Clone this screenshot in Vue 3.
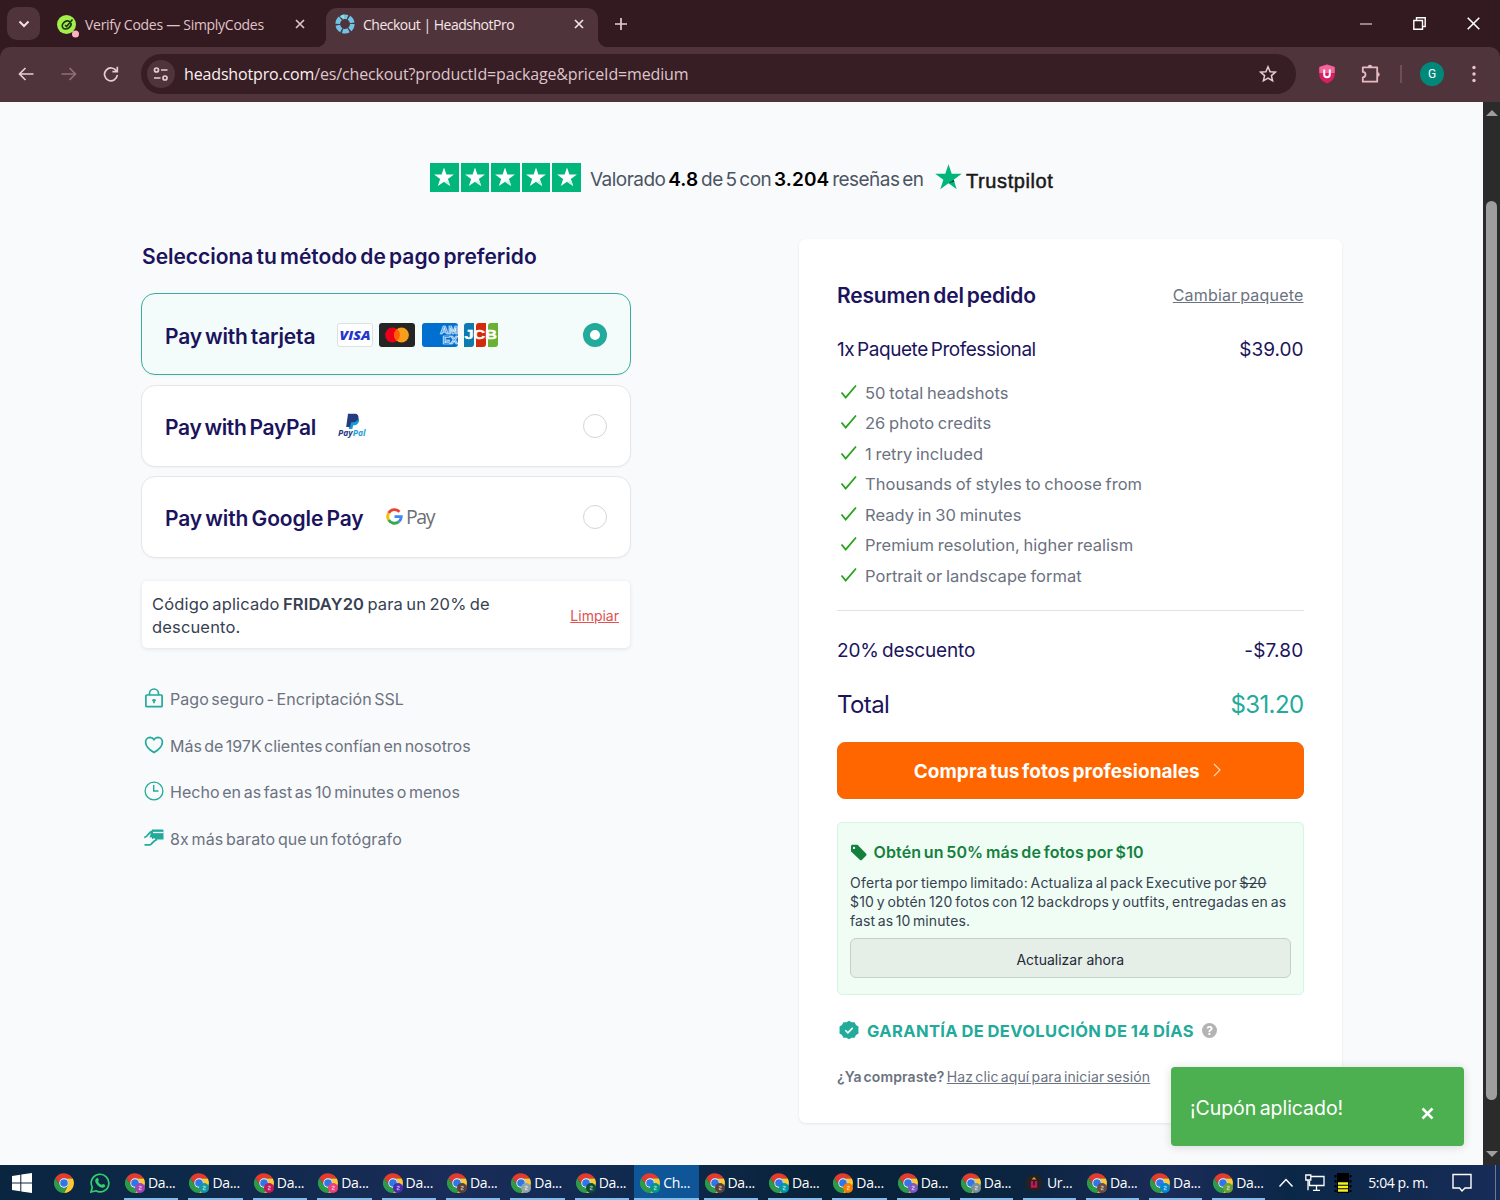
<template>
  <div class="desktop">
    <header class="browser">
      <div class="tab-strip">
        <div class="tab-search">
          <svg width="12" height="8" viewBox="0 0 12 8"><path d="M1.500 1.500 6 6l4.500-4.500" fill="none" stroke="#f6dfe2" stroke-width="2" /></svg>
        </div>
        <div class="tab idle">
          <svg class="favicon" width="24" height="24" viewBox="0 0 24 24">
            <circle cx="10.500" cy="10.500" r="9.500" fill="#a4f04a" />
            <path d="M14.500 8.500c-1.500-1.800-4-2-6-.5s-3 4-1.700 5.700 4 1.600 5.900.3 2.700-3.300 2.300-5M9 11l1.500 1.500 6-7" fill="none" stroke="#1c3312" stroke-width="1.600" />
            <circle cx="19.500" cy="20" r="3.500" fill="#ffb3c1" />
          </svg>
          <span class="tab-title first">Verify Codes — SimplyCodes</span>
          <svg class="close" width="10" height="10" viewBox="0 0 10 10"><path d="m1 1 8 8M9 1 1 9" stroke="#dfc3c8" stroke-width="1.700" /></svg>
        </div>
        <div class="tab active">
          <svg class="favicon" width="20" height="20" viewBox="0 0 20 20">
            <circle cx="10" cy="10" r="7.300" fill="none" stroke="#6fc3e8" stroke-width="4.600" stroke-dasharray="6.200 1.445" />
            <path d="M4.500 3A9 9 0 0 1 9 .5v4Z" fill="#8be3d0" />
          </svg>
          <span class="tab-title second">Checkout | HeadshotPro</span>
          <svg class="close" width="10" height="10" viewBox="0 0 10 10"><path d="m1 1 8 8M9 1 1 9" stroke="#f3e3e5" stroke-width="1.700" /></svg>
        </div>
        <svg class="new-tab" width="14" height="14" viewBox="0 0 14 14"><path d="M7 1v12M1 7h12" stroke="#e6cdd1" stroke-width="1.700" /></svg>
        <div class="window-controls">
          <svg width="12" height="12" viewBox="0 0 12 12"><path d="M0 6h12" stroke="#b8a8ac" stroke-width="1.500" /></svg>
          <svg width="13" height="13" viewBox="0 0 13 13"><path d="M.8 3.500h8.700v8.700H.8ZM3.500 3.500V.8h8.700v8.700H9.500" fill="none" stroke="#fff" stroke-width="1.400" /></svg>
          <svg width="13" height="13" viewBox="0 0 13 13"><path d="m.7.7 11.600 11.600M12.300.7.7 12.300" stroke="#fff" stroke-width="1.600" /></svg>
        </div>
      </div>

      <div class="toolbar">
        <svg class="nav-back" width="16" height="14" viewBox="0 0 16 14"><path d="M15.500 7H1.500M7.500 1l-6 6 6 6" fill="none" stroke="#e6cdd1" stroke-width="1.700" /></svg>
        <svg class="nav-forward" width="16" height="14" viewBox="0 0 16 14"><path d="M.5 7h14M8.500 1l6 6-6 6" fill="none" stroke="#8d6f76" stroke-width="1.700" /></svg>
        <svg class="nav-reload" width="16" height="16" viewBox="0 0 16 16"><path d="M13.500 5.200A6.400 6.400 0 1 0 14.300 9M14.300.8v4.900H9.400" fill="none" stroke="#e6cdd1" stroke-width="1.700" /></svg>
        <div class="address-bar">
          <span class="site-info">
            <svg width="16" height="14" viewBox="0 0 16 14">
              <g fill="none" stroke="#e6cdd1" stroke-width="1.700">
                <circle cx="3.500" cy="3" r="2" /><path d="M8 3h6.500M1 11h6.500" /><circle cx="12" cy="11" r="2" />
              </g>
            </svg>
          </span>
          <span class="url"><b>headshotpro.com</b>/es/checkout?productId=package&amp;priceId=medium</span>
          <svg class="bookmark" width="18" height="18" viewBox="0 0 18 18"><path d="m9 1.800 2.100 4.900 5.300.4-4 3.500 1.200 5.200L9 13.100l-4.600 2.700 1.200-5.200-4-3.500 5.300-.4Z" fill="none" stroke="#e6cdd1" stroke-width="1.500" /></svg>
        </div>
        <svg class="ublock" width="16" height="20" viewBox="0 0 16 20">
          <path d="M8 .5 15.700 3v8c0 4-4 7-7.700 8.500C4.300 18 .3 15 .3 11V3Z" fill="#d91e63" />
          <path d="M8 .5 15.700 3v6H.3V3Z" fill="#f1659a" />
          <path d="M5.200 5.500v5a2.800 2.800 0 0 0 5.600 0v-5" fill="none" stroke="#fff" stroke-width="2" />
        </svg>
        <svg class="extensions" width="20" height="20" viewBox="0 0 20 20"><path d="M1.800 3.300h14.400v14.400H1.800v-4.400a2.500 2.500 0 0 0 0-5.400Z" fill="none" stroke="#e9b9c2" stroke-width="1.800" stroke-linejoin="round" /><path d="M6.800 3a2.200 2.200 0 0 1 4.400 0ZM16.500 8.300a2.200 2.200 0 0 1 0 4.400Z" fill="#e9b9c2" /></svg>
        <span class="separator"></span>
        <span class="avatar">G</span>
        <svg class="menu" width="4" height="18" viewBox="0 0 4 18"><g fill="#e9c5cb"><circle cx="2" cy="2.500" r="1.700" /><circle cx="2" cy="9" r="1.700" /><circle cx="2" cy="15.500" r="1.700" /></g></svg>
      </div>
    </header>

    <div class="viewport">
      <main class="page">
        <div class="rating">
          <div class="stars">
            <span v-for="n in 5" :key="n" class="star-box">
              <svg width="22" height="22" viewBox="0 0 24 24"><path :d="starPath" fill="#fff" /><path d="m12 17.100 4.900-1.300 1.800 6.100Z" fill="#c9f0e0" /></svg>
            </span>
          </div>
          <p class="rating-text">Valorado <b>4.8</b> de 5 con <b>3.204</b> reseñas en</p>
          <svg class="trustpilot-star" width="27" height="27" viewBox="1 1 22 21"><path :d="starPath" fill="#00b67a" /><path d="m12 17.100 4.900-1.300-.7-1.700Z" fill="#005128" /></svg>
          <span class="trustpilot">Trustpilot</span>
        </div>

        <div class="columns">
          <section class="payment">
            <h2>Selecciona tu método de pago preferido</h2>

            <div class="methods">
              <div v-for="method in methods" :key="method.id" class="method" :class="{ selected: method.id === selected }" @click="selected = method.id">
                <span class="method-name" :class="method.id">{{ method.label }}</span>
                <div v-if="method.id === 'card'" class="cards">
                  <svg width="36" height="24" viewBox="0 0 36 24">
                    <rect x=".5" y=".5" width="35" height="23" rx="2.500" fill="#fff" stroke="#dcdfe6" />
                    <text x="2.500" y="17" font-family="Open Sans, sans-serif" font-size="13" font-weight="800" font-style="italic" fill="#2436cf" textLength="31" lengthAdjust="spacingAndGlyphs">VISA</text>
                  </svg>
                  <svg width="36" height="24" viewBox="0 0 36 24">
                    <rect width="36" height="24" rx="3" fill="#252525" />
                    <circle cx="13.500" cy="12" r="7.400" fill="#eb001b" /><circle cx="22.500" cy="12" r="7.400" fill="#f79e1b" />
                    <path d="M18 6.100a7.400 7.400 0 0 1 0 11.800 7.400 7.400 0 0 1 0-11.800Z" fill="#ff5f00" />
                  </svg>
                  <svg width="36" height="24" viewBox="0 0 36 24">
                    <rect width="36" height="24" rx="3" fill="#016fd0" />
                    <g font-family="Liberation Sans, sans-serif" font-size="10" font-weight="700" fill="#016fd0" stroke="#e9f4ff" stroke-width=".7">
                      <text x="18" y="11" textLength="18" lengthAdjust="spacingAndGlyphs">AM</text>
                      <text x="20.500" y="20.500" textLength="15.500" lengthAdjust="spacingAndGlyphs">EX</text>
                    </g>
                  </svg>
                  <svg width="34" height="24" viewBox="0 0 34 24">
                    <path d="M3 0h7v21a3 3 0 0 1-3 3H0V3a3 3 0 0 1 3-3Z" fill="#0e7bb0" />
                    <path d="M15 0h7v21a3 3 0 0 1-3 3h-7V3a3 3 0 0 1 3-3Z" fill="#d42a0b" />
                    <path d="M27 0h7v21a3 3 0 0 1-3 3h-7V3a3 3 0 0 1 3-3Z" fill="#68b132" />
                    <text x=".5" y="16" font-family="Liberation Sans, sans-serif" font-size="12" font-weight="700" fill="#fff" stroke="#fff" stroke-width=".4" textLength="32.500" lengthAdjust="spacingAndGlyphs">JCB</text>
                  </svg>
                </div>
                <svg v-else-if="method.id === 'paypal'" class="paypal-logo" width="29" height="26" viewBox="0 0 29 26">
                  <path d="M12 4h6.500c3 .5 3 3.500 2 5.500s-3 2.800-5.300 2.800L14.300 16H10.800Z" fill="#169bd7" />
                  <path d="M10 .7h6.500c3 0 4.500 2 3.800 4.800-.7 2.700-2.800 3.700-5.600 3.700h-1.500l-1 4.800H8.200Z" fill="#253b80" />
                  <text x="0" y="23" font-family="Open Sans, sans-serif" font-size="8" font-weight="700" font-style="italic" textLength="27.500" lengthAdjust="spacingAndGlyphs"><tspan fill="#253b80">Pay</tspan><tspan fill="#249fd8">Pal</tspan></text>
                </svg>
                <div v-else class="gpay-logo">
                  <svg width="17" height="17" viewBox="0 0 17 17" fill="none" stroke-width="2.900">
                    <path d="M13.500 3.700A6.800 6.800 0 0 0 2.700 5" stroke="#ea4335" />
                    <path d="M2.700 5a6.800 6.800 0 0 0 0 7" stroke="#fbbc04" />
                    <path d="M2.700 12a6.800 6.800 0 0 0 10.200 1.700" stroke="#34a853" />
                    <path d="M12.900 13.700A6.800 6.800 0 0 0 15.300 8.600H8.500" stroke="#4285f4" />
                  </svg>
                  <span>Pay</span>
                </div>
                <span class="radio"></span>
              </div>
            </div>

            <div class="coupon">
              <p>Código aplicado <b>FRIDAY20</b> para un 20% de<br>descuento.</p>
              <a>Limpiar</a>
            </div>

            <ul class="trust">
              <li v-for="item in trust" :key="item.icon">
                <svg width="20" height="20" viewBox="0 0 20 20" fill="none" stroke="#22aa9b" stroke-width="1.700">
                  <template v-if="item.icon === 'lock'">
                    <rect x="1.900" y="7" width="16.200" height="11.700" rx=".8" />
                    <path d="M5.500 7V5.500a4.500 4.500 0 0 1 9 0V7M10 11v4.200M8.200 12.400h3.600" />
                  </template>
                  <path v-else-if="item.icon === 'heart'" d="M10 17.500C6.500 15.500 1.600 11.500 1.600 7A4.700 4.700 0 0 1 6 2.300c1.800 0 3.200.9 4 2.300.8-1.400 2.200-2.300 4-2.300A4.700 4.700 0 0 1 18.400 7c0 4.500-4.900 8.500-8.400 10.500Z" />
                  <template v-else-if="item.icon === 'clock'">
                    <circle cx="10" cy="10" r="8.900" stroke-width="1.300" /><path d="M9.700 4v6h4.800" stroke-width="1.400" />
                  </template>
                  <template v-else>
                    <path d="M8 1.500h10.500a1 1 0 0 1 1 1v9h-7.300L8.500 9 5.500 9.500Z" fill="#22aa9b" stroke="none" />
                    <path d="M9 4.500h10.500" stroke="#f9fafc" stroke-width="1.300" />
                    <path d="M.3 9.500C4 9 4.500 3.500 8.500 3.500M12 6.500 8 10.500M.5 16.800h5.500c1.500 0 3-4 7-5.500" stroke-width="1.800" />
                  </template>
                </svg>
                <span :class="item.icon">{{ item.text }}</span>
              </li>
            </ul>
          </section>

          <section class="summary">
            <div class="summary-head">
              <h2>Resumen del pedido</h2>
              <a>Cambiar paquete</a>
            </div>
            <div class="line package">
              <span class="package-name">1x Paquete Professional</span>
              <span>$39.00</span>
            </div>
            <ul class="features">
              <li v-for="feature in features" :key="feature">
                <svg width="18" height="16" viewBox="0 0 18 16"><path d="m1.500 8.500 4.200 5L16 1.500" fill="none" stroke="#27a31b" stroke-width="1.800" /></svg>
                {{ feature }}
              </li>
            </ul>
            <div class="divider"></div>
            <div class="line discount">
              <span class="discount-name">20% descuento</span>
              <span class="discount-value">-$7.80</span>
            </div>
            <div class="total">
              <span>Total</span>
              <span class="amount">$31.20</span>
            </div>
            <button class="buy">
              <span>Compra tus fotos profesionales</span>
              <svg width="8" height="14" viewBox="0 0 8 14"><path d="m1 1 6 6-6 6" fill="none" stroke="#ffd9bd" stroke-width="1.200" /></svg>
            </button>

            <div class="promo">
              <h3>
                <svg width="17" height="17" viewBox="0 0 17 17"><path d="M2.500.8 7.500.8 16 9.500c.7.700.7 1.500 0 2.200L12 15.800c-.7.7-1.500.7-2.200 0L1 7.500V2.300C1 1.400 1.600.8 2.500.8Z" fill="#15803d" /><circle cx="4" cy="3.900" r="1.200" fill="#effdf4" /></svg>
                <span>Obtén un 50% más de fotos por $10</span>
              </h3>
              <p>
                <span class="l1">Oferta por tiempo limitado: Actualiza al pack Executive por <s>$20</s></span>
                <span class="l2">$10 y obtén 120 fotos con 12 backdrops y outfits, entregadas en as</span>
                <span class="l3">fast as 10 minutes.</span>
              </p>
              <button>Actualizar ahora</button>
            </div>

            <div class="guarantee">
              <svg width="20" height="20" viewBox="0 0 20 20">
                <path d="m10 .8 2.600 1.500 3-.1 1.400 2.700 2.500 1.600L19.400 10l.1 3.500-2.500 1.600-1.400 2.700-3-.1L10 19.200l-2.600-1.500-3 .1L3 15.100.5 13.500.6 10 .5 6.500 3 4.900l1.400-2.700 3 .1Z" fill="#22aa9b" />
                <path d="m6.300 10.300 2.600 2.600 4.800-5" fill="none" stroke="#fff" stroke-width="1.600" />
              </svg>
              <span>GARANTÍA DE DEVOLUCIÓN DE 14 DÍAS</span>
              <i class="help">?</i>
            </div>
            <p class="login"><b>¿Ya compraste?</b> <a>Haz clic aquí para iniciar sesión</a></p>
          </section>
        </div>
      </main>

      <div class="scrollbar">
        <span class="arrow up"></span>
        <span class="thumb"></span>
        <span class="arrow down"></span>
      </div>

      <div class="toast">
        <span>¡Cupón aplicado!</span>
        <svg width="13" height="13" viewBox="0 0 13 13"><path d="m1.500 1.500 10 10M11.500 1.500l-10 10" stroke="#fff" stroke-width="2.500" /></svg>
      </div>
    </div>

    <footer class="taskbar">
      <svg class="start" width="20" height="20" viewBox="0 0 20 20"><path d="M0 3 8.300 1.700v7.700H0ZM9.300 1.500 20 0v9.400H9.300ZM0 10.500h8.300v7.800L0 17ZM9.300 10.500H20V20L9.300 18.500Z" fill="#fff" /></svg>
      <svg class="pinned-chrome" width="20" height="20" viewBox="0 0 24 24">
        <path v-for="part in chromeParts" :key="part.fill" :d="part.d" :fill="part.fill" />
        <circle cx="12" cy="12" r="5.700" fill="#fff" /><circle cx="12" cy="12" r="4.600" fill="#2f76e8" />
      </svg>
      <svg class="whatsapp" width="20" height="20" viewBox="0 0 20 20">
        <path d="M1 19l1.300-4.700A8.800 8.800 0 1 1 5.800 17.800Z" fill="none" stroke="#31d06a" stroke-width="1.700" />
        <path d="M6.300 5.500c.9-1 1.500-.7 1.900.1l.6 1.500c.1.600-.8 1.200-.6 1.600.8 1.500 1.900 2.500 3.400 3.100.4.200 1-.9 1.500-.8l2 .9c.5 1.700-1 2.800-2.600 2.800-3.500-.3-7.300-4.200-7.300-7 0-.9.500-1.700 1.100-2.200Z" fill="#31d06a" />
      </svg>
      <div class="tasks">
        <div v-for="(task, i) in tasks" :key="i" class="task" :class="{ current: task.label === 'Ch...', tight: i > 11 }">
          <svg v-if="task.badge" width="20" height="20" viewBox="0 0 24 24">
            <path v-for="part in chromeParts" :key="part.fill" :d="part.d" :fill="part.fill" />
            <circle cx="12" cy="12" r="5.700" fill="#fff" /><circle cx="12" cy="12" r="4.600" fill="#2f76e8" />
            <circle cx="18" cy="18" r="6" :fill="task.badge" />
            <path d="M16.500 16h3v1.500l-2.500 1v1.500h3" fill="none" stroke="#fff" stroke-opacity=".7" />
          </svg>
          <svg v-else width="20" height="20" viewBox="0 0 20 20">
            <circle cx="10" cy="10" r="8.500" fill="#27211f" />
            <path d="M8 8v5.500h4V8" fill="none" stroke="#c2185b" stroke-width="2.300" /><path d="M7.500 6.500 10 4l2.500 2.500Z" fill="#d39b38" />
          </svg>
          <span>{{ task.label }}</span>
        </div>
      </div>
      <svg class="tray-chevron" width="16" height="10" viewBox="0 0 16 10"><path d="m1.500 8.500 6.500-7 6.500 7" fill="none" stroke="#fff" stroke-width="1.500" /></svg>
      <svg class="network" width="20" height="18" viewBox="0 0 20 18">
        <g fill="none" stroke="#fff" stroke-width="1.300"><path d="M6 2.500h13v9H4.500V7M11.500 12v4.300M8 16.300h7M.8 1h5v5h-5ZM3 6v10.300" /></g>
      </svg>
      <svg class="memory" width="20" height="20" viewBox="0 0 20 20">
        <rect x="4" width="12" height="20" fill="#000" />
        <path d="M2.500 2v17M17.500 2v17" stroke="#000" stroke-width="2" stroke-dasharray="2.500 2.500" />
        <path d="M5 10.500h10M5 14h10M5 17.500h10" stroke="#f4f01d" stroke-width="2.300" />
      </svg>
      <span class="time">5:04 p. m.</span>
      <svg class="notifications" width="20" height="20" viewBox="0 0 20 20"><path d="M1 1.500h18v13.500h-6L10 18 7.500 15H1Z" fill="none" stroke="#fff" stroke-width="1.400" /></svg>
      <span class="show-desktop"></span>
    </footer>
  </div>
</template>

<script setup>
import { ref } from 'vue'

const selected = ref('card')

const starPath = 'M12 1.500 14.600 9.300H22.800L16.200 14.100 18.700 21.900 12 17.100 5.300 21.900 7.800 14.100 1.200 9.300H9.400Z'

const methods = [
  { id: 'card', label: 'Pay with tarjeta' },
  { id: 'paypal', label: 'Pay with PayPal' },
  { id: 'gpay', label: 'Pay with Google Pay' }
]

const trust = [
  { icon: 'lock', text: 'Pago seguro - Encriptación SSL' },
  { icon: 'heart', text: 'Más de 197K clientes confían en nosotros' },
  { icon: 'clock', text: 'Hecho en as fast as 10 minutes o menos' },
  { icon: 'price', text: '8x más barato que un fotógrafo' }
]

const features = [
  '50 total headshots',
  '26 photo credits',
  '1 retry included',
  'Thousands of styles to choose from',
  'Ready in 30 minutes',
  'Premium resolution, higher realism',
  'Portrait or landscape format'
]

const chromeParts = [
  { fill: '#e33b2e', d: 'M1.600 6A12 12 0 0 1 22.400 6.500H12A5.500 5.500 0 0 0 7.200 14.700Z' },
  { fill: '#fcc934', d: 'M22.600 6.500A12 12 0 0 1 12 24L16.800 14.700A5.500 5.500 0 0 0 12 6.500Z' },
  { fill: '#2c9a48', d: 'M1.600 6A12 12 0 0 0 12 24L16.800 14.700H7.200Z' }
]

const tasks = [
  { label: 'Da...', badge: '#a142b8' },
  { label: 'Da...', badge: '#1497a5' },
  { label: 'Da...', badge: '#c2185b' },
  { label: 'Da...', badge: '#ec407a' },
  { label: 'Da...', badge: '#4a2bb0' },
  { label: 'Da...', badge: '#5d4037' },
  { label: 'Da...', badge: '#90a4ae' },
  { label: 'Da...', badge: '#0b4f36' },
  { label: 'Ch...', badge: '#009688' },
  { label: 'Da...', badge: '#5d4037' },
  { label: 'Da...', badge: '#0097a7' },
  { label: 'Da...', badge: '#f57c00' },
  { label: 'Da...', badge: '#7e57c2' },
  { label: 'Da...', badge: '#78909c' },
  { label: 'Ur...', badge: '' },
  { label: 'Da...', badge: '#6d4c41' },
  { label: 'Da...', badge: '#0288d1' },
  { label: 'Da...', badge: '#689f38' }
]
</script>

<style>
body {
  margin: 0;
  overflow: hidden;
}
</style>

<style scoped>
.desktop {
  display: flex;
  flex-direction: column;
  width: 1500px;
  height: 1200px;
  overflow: hidden;
  font-family: Inter, "Open Sans", sans-serif;
  white-space: nowrap;
}

h2, h3, p, ul {
  margin: 0;
  padding: 0;
  list-style: none;
}

svg {
  display: block;
  flex: none;
}

button {
  font-family: inherit;
  box-sizing: border-box;
}

/* browser */
.browser {
  height: 102px;
  background: #321a20;
  font-family: "Open Sans", "Noto Sans", sans-serif;
}

.tab-strip {
  display: flex;
  align-items: center;
  height: 47px;
}

.tab-search {
  display: flex;
  align-items: center;
  justify-content: center;
  width: 33px;
  height: 33px;
  margin-left: 7px;
  border-radius: 10px;
  background: #50343b;
}

.tab {
  display: flex;
  align-items: center;
  box-sizing: border-box;
}

.tab.idle {
  width: 286px;
  padding: 1px 0 0 16px;
}

.tab.idle .favicon {
  margin-top: 3px;
}

.tab.active {
  position: relative;
  align-self: flex-end;
  width: 272px;
  height: 39px;
  padding: 0 14px 7px 9px;
  border-radius: 11px 11px 0 0;
  background: #50343b;
}

.tab.active::before,
.tab.active::after {
  content: "";
  position: absolute;
  bottom: 0;
  width: 10px;
  height: 10px;
}

.tab.active::before {
  left: -10px;
  background: radial-gradient(circle at 0 0, transparent 10px, #50343b 10.5px);
}

.tab.active::after {
  right: -10px;
  background: radial-gradient(circle at 100% 0, transparent 10px, #50343b 10.5px);
}

.tab-title {
  color: #f6e6e8;
  font-size: 14px;
}

.tab-title.first {
  margin-left: 5px;
  color: #e0c4c9;
  letter-spacing: -0.28px;
}

.tab-title.second {
  margin-left: 8px;
  letter-spacing: -0.5px;
}

.tab .close {
  margin-left: auto;
}

.tab.idle .close {
  margin-right: 21px;
}

.new-tab {
  margin-left: 16px;
}

.window-controls {
  display: flex;
  align-items: center;
  gap: 41px;
  margin: 0 20px 0 auto;
}

.toolbar {
  display: flex;
  align-items: center;
  height: 55px;
  padding-bottom: 1px;
  box-sizing: border-box;
  border-radius: 10px 10px 0 0;
  background: #50343b;
}

.nav-back {
  margin-left: 18px;
}

.nav-forward {
  margin-left: 27px;
}

.nav-reload {
  margin-left: 26px;
}

.address-bar {
  display: flex;
  align-items: center;
  width: 1155px;
  height: 40px;
  margin-left: 22px;
  border-radius: 20px;
  box-sizing: border-box;
  padding: 0 19px 0 6px;
  background: #371d24;
}

.site-info {
  display: flex;
  align-items: center;
  justify-content: center;
  width: 28px;
  height: 28px;
  border-radius: 50%;
  background: #50343b;
}

.url {
  margin-left: 9px;
  color: #ddc6ca;
  font-size: 16px;
  letter-spacing: -0.15px;
}

.url b {
  color: #fdf0f1;
  font-weight: 400;
}

.bookmark {
  margin-left: auto;
}

.ublock {
  margin-left: 23px;
}

.extensions {
  margin-left: 26px;
}

.separator {
  width: 2px;
  height: 18px;
  margin-left: 19px;
  background: #6f4f56;
}

.avatar {
  width: 24px;
  height: 24px;
  margin-left: 18px;
  border-radius: 50%;
  background: #00897b;
  color: #fff;
  font: 12px/24px Roboto, sans-serif;
  text-align: center;
}

.menu {
  margin-left: 28px;
}

/* page */
.viewport {
  position: relative;
  display: flex;
  height: 1063px;
}

.page {
  width: 1483px;
  box-sizing: border-box;
  padding-top: 60px;
  background: #f9fafc;
}

.rating {
  display: flex;
  align-items: center;
  height: 30px;
  padding-left: 430px;
}

.stars {
  display: flex;
  gap: 2px;
}

.star-box {
  display: flex;
  align-items: center;
  justify-content: center;
  width: 28.6px;
  height: 29px;
  background: #00b67a;
}

.rating-text {
  width: 335px;
  margin: 4px 0 0 9px;
  color: #4b5563;
  font-size: 19px;
  letter-spacing: -0.53px;
  word-spacing: -2px;
}

.rating-text b {
  color: #000;
  font-weight: 600;
  letter-spacing: 0.1px;
}

.trustpilot-star {
  margin: 0 0 1px 10px;
}

.trustpilot {
  margin: 8px 0 0 4px;
  color: #191919;
  font: 20px "Liberation Sans", Arial, sans-serif;
  letter-spacing: 0.6px;
  -webkit-text-stroke: 0.5px #191919;
}

.columns {
  display: flex;
  align-items: flex-start;
  gap: 168px;
  margin-top: 47px;
  padding-left: 141px;
}

.payment {
  width: 490px;
}

h2 {
  color: #1b145d;
  font-size: 21px;
  font-weight: 600;
  letter-spacing: -0.18px;
  word-spacing: -2px;
}

.payment h2 {
  height: 36px;
  margin-bottom: 18px;
  padding-left: 1px;
  line-height: 36px;
  letter-spacing: -0.03px;
}

.methods {
  display: flex;
  flex-direction: column;
  gap: 9.5px;
}

.method {
  display: flex;
  align-items: center;
  height: 82px;
  box-sizing: border-box;
  padding: 0 23px;
  border: 1px solid #e5e7eb;
  border-radius: 14px;
  background: #fff;
  box-shadow: 0 1px 2px rgba(0, 0, 0, 0.04);
}

.method.selected {
  padding-top: 1px;
  border-color: #3aaea1;
  background: #f3fcfb;
}

.method-name {
  margin-top: 3px;
  color: #1b145d;
  font-size: 21px;
  font-weight: 600;
  word-spacing: -2px;
}

.method-name.card {
  width: 150px;
  letter-spacing: -0.18px;
}

.method-name.paypal {
  width: 151px;
  letter-spacing: -0.33px;
}

.method-name.gpay {
  width: 198px;
  letter-spacing: -0.1px;
}

.cards {
  display: flex;
  gap: 6.3px;
  margin-left: 22px;
}

.paypal-logo {
  margin-left: 22px;
}

.gpay-logo {
  display: flex;
  align-items: center;
  gap: 3px;
  margin: 0 0 1px 23px;
  color: #6b6f74;
  font: 19.5px "Open Sans", sans-serif;
  letter-spacing: -1.4px;
}

.radio {
  width: 24px;
  height: 24px;
  box-sizing: border-box;
  margin-left: auto;
  border: 1px solid #d1d5db;
  border-radius: 50%;
  background: #fff;
}

.selected .radio {
  border: 7px solid #22aa9b;
}

.coupon {
  display: flex;
  align-items: center;
  justify-content: space-between;
  width: 488px;
  height: 67px;
  margin: 23px 0 0 1px;
  box-sizing: border-box;
  padding: 3px 11px 0 10px;
  border-radius: 5px;
  background: #fff;
  box-shadow: 0 1px 4px rgba(0, 0, 0, 0.1);
  color: #374151;
  font-size: 16.5px;
  line-height: 23.5px;
}

.coupon p {
  letter-spacing: 0.15px;
  word-spacing: -1.5px;
}

.coupon b {
  font-weight: 600;
}

.coupon a {
  color: #e05252;
  font-size: 14px;
  text-decoration: underline;
}

.trust {
  margin-top: 26.5px;
  color: #6b7280;
  font-size: 16px;
}

.trust li {
  display: flex;
  align-items: center;
  gap: 6px;
  height: 46.8px;
  padding-left: 3px;
}

.trust span {
  margin-top: 2px;
  letter-spacing: 0.05px;
  word-spacing: -2px;
}

.trust .heart {
  letter-spacing: -0.03px;
}

.trust .price {
  letter-spacing: 0.12px;
}

/* order summary */
.summary {
  width: 543px;
  height: 884px;
  box-sizing: border-box;
  padding: 36px 38.5px 0 38px;
  border-radius: 7px;
  background: #fff;
  box-shadow: 0 1px 3px rgba(0, 0, 0, 0.08);
}

.summary-head {
  display: flex;
  align-items: center;
  justify-content: space-between;
  height: 40px;
}

.summary-head a {
  color: #6b7280;
  font-size: 16px;
  letter-spacing: 0.2px;
  word-spacing: -2px;
  text-decoration: underline;
}

.line {
  display: flex;
  align-items: center;
  justify-content: space-between;
  height: 30px;
  color: #1b145d;
  font-size: 19px;
}

.package {
  margin-top: 19px;
}

.package-name {
  letter-spacing: -0.45px;
  word-spacing: -2px;
}

.features {
  margin-top: 13.5px;
  color: #6b7280;
  font-size: 16.5px;
}

.features li {
  display: flex;
  align-items: center;
  gap: 7px;
  height: 30.5px;
  padding-left: 3px;
  letter-spacing: 0.04px;
  word-spacing: -1px;
}

.features svg {
  margin-top: -2px;
}

.divider {
  height: 1px;
  margin-top: 19px;
  background: #dfe1e6;
}

.discount {
  margin-top: 24px;
}

.discount-name {
  letter-spacing: -0.15px;
  word-spacing: -2px;
}

.discount-value {
  letter-spacing: 0.2px;
}

.total {
  display: flex;
  align-items: center;
  justify-content: space-between;
  height: 40px;
  margin-top: 19.5px;
  color: #1b145d;
  font-size: 24px;
  letter-spacing: -0.6px;
}

.amount {
  color: #22aa9b;
}

.buy {
  display: flex;
  align-items: center;
  justify-content: center;
  gap: 13px;
  width: 100%;
  height: 56.5px;
  margin-top: 17.5px;
  padding: 0 12px 0 6px;
  border: 1px solid #f06a0c;
  border-radius: 8px;
  background: #ff6600;
  color: #fff;
  font-size: 19px;
  font-weight: 700;
  letter-spacing: 0.03px;
  word-spacing: -2px;
}

.buy span {
  margin-top: 2px;
}

.promo {
  height: 173px;
  margin-top: 23.5px;
  box-sizing: border-box;
  padding: 17px 12px 0;
  border: 1px solid #d5f7e1;
  border-radius: 5px;
  background: #effdf4;
}

.promo h3 {
  display: flex;
  align-items: center;
  gap: 6.5px;
  height: 24px;
  color: #15803d;
  font-size: 16px;
  font-weight: 600;
  letter-spacing: 0.12px;
  word-spacing: -1.5px;
}

.promo p {
  margin-top: 10px;
  color: #374151;
  font-size: 14px;
  line-height: 18.8px;
  word-spacing: -1.5px;
}

.promo p > span {
  display: block;
  letter-spacing: 0.2px;
}

.promo p .l3 {
  letter-spacing: 0.1px;
}

.promo button {
  width: 100%;
  height: 40px;
  margin-top: 7.5px;
  padding-top: 4px;
  border: 1px solid #c5d0c9;
  border-radius: 6px;
  background: #e5eee7;
  color: #1f2937;
  font-size: 14px;
}

.guarantee {
  display: flex;
  align-items: center;
  height: 30px;
  margin-top: 20px;
  padding-left: 2px;
  color: #22aa9b;
  font-size: 16.5px;
  font-weight: 700;
}

.guarantee span {
  margin: 2px 0 0 8px;
  letter-spacing: 0.4px;
  word-spacing: -1px;
}

.help {
  width: 15px;
  height: 15px;
  margin-left: 8px;
  border-radius: 50%;
  background: #b3b3b3;
  color: #fff;
  font: bold 12px/15px Inter, sans-serif;
  text-align: center;
}

.login {
  height: 24px;
  margin-top: 20px;
  color: #6b7280;
  font-size: 14px;
  line-height: 24px;
  letter-spacing: 0.11px;
  word-spacing: -1.8px;
}

.login b {
  font-weight: 600;
}

.login a {
  text-decoration: underline;
}

.scrollbar {
  display: flex;
  flex-direction: column;
  align-items: center;
  width: 17px;
  box-sizing: border-box;
  padding: 8px 0 8px;
  background: #2b2b2b;
}

.arrow {
  border: 6px solid transparent;
}

.arrow.up {
  border-top: 0;
  border-bottom-color: #9e9e9e;
}

.arrow.down {
  margin-top: auto;
  border-bottom: 0;
  border-top-color: #9e9e9e;
}

.thumb {
  width: 11px;
  height: 899px;
  margin-top: 85px;
  border-radius: 6px;
  background: #9e9e9e;
}

.toast {
  position: absolute;
  right: 36px;
  bottom: 19px;
  display: flex;
  align-items: center;
  justify-content: space-between;
  width: 293px;
  height: 79px;
  box-sizing: border-box;
  padding: 3px 30px 0 19px;
  border-radius: 4px;
  background: #4caf50;
  box-shadow: 0 1px 10px rgba(0, 0, 0, 0.15);
  color: #fff;
  font-size: 19.5px;
  letter-spacing: -0.05px;
  word-spacing: -2px;
}

.toast svg {
  margin-top: 10px;
}

/* taskbar */
.taskbar {
  display: flex;
  align-items: center;
  height: 35px;
  background: linear-gradient(90deg, #0a2540 0%, #0d2949 12%, #1a2c59 30%, #112b52 40%, #08223a 55%, #0b2440 68%, #1a2c59 78%, #0b2747 86%, #172c57 100%);
  color: #fff;
  font-family: "Open Sans", sans-serif;
}

.start {
  margin-left: 12px;
}

.pinned-chrome {
  margin-left: 22px;
}

.whatsapp {
  margin-left: 16px;
}

.tasks {
  display: flex;
  height: 35px;
  margin-left: 9px;
}

.task {
  position: relative;
  display: flex;
  align-items: center;
  width: 64.4px;
  box-sizing: border-box;
  padding-left: 6px;
  font-size: 14px;
  letter-spacing: -0.3px;
}

.task.tight {
  width: 63.1px;
}

.task.current {
  background: #0f5698;
}

.task span {
  margin-left: 3px;
}

.task::after {
  content: "";
  position: absolute;
  right: 5px;
  bottom: 0;
  left: 5px;
  height: 2px;
  background: #83bdee;
}

.task.current::after {
  right: 0;
  left: 0;
}

.tray-chevron {
  margin-left: 8px;
}

.network {
  margin-left: 11px;
}

.memory {
  margin-left: 8px;
}

.time {
  width: 61px;
  margin-left: 15px;
  font-size: 14px;
  letter-spacing: -0.4px;
}

.notifications {
  margin-left: 23px;
}

.show-desktop {
  width: 1px;
  height: 35px;
  margin-left: auto;
  margin-right: 4px;
  background: #6b7a96;
}
</style>
